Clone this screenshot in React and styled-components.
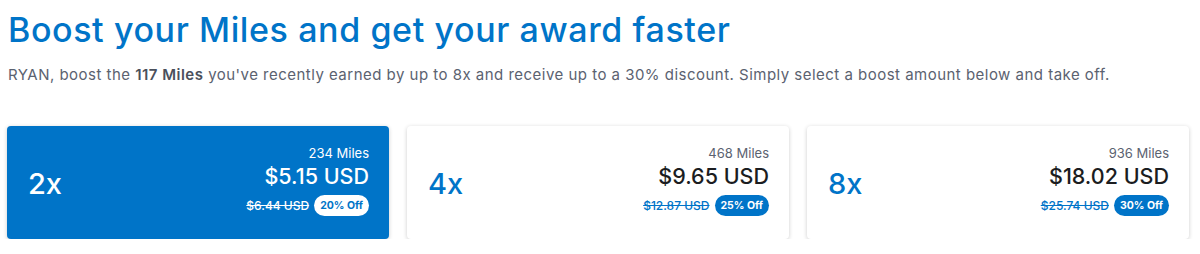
import React from 'react';
import styled, { createGlobalStyle } from 'styled-components';

const GlobalStyle = createGlobalStyle`
  body {
    margin: 0;
    background: #ffffff;
    font-family: "Inter", "Noto Sans", sans-serif;
  }
`;

const Page = styled.div`
  padding: 10px 11px 0 7px;
`;

const Title = styled.h1`
  margin: 0 0 0 1px;
  font-size: 34px;
  font-weight: 500;
  line-height: 40px;
  color: #0074c8;
  letter-spacing: 0.6px;
`;

const Intro = styled.p`
  margin: 15px 0 0 1px;
  font-size: 15px;
  line-height: 20px;
  letter-spacing: 0.48px;
  color: #5b6270;

  strong {
    font-weight: 600;
    color: #4a505c;
  }
`;

const Cards = styled.div`
  display: grid;
  grid-template-columns: repeat(3, 382px);
  gap: 18px;
  margin-top: 41px;
`;

const Card = styled.div`
  height: 113px;
  box-sizing: border-box;
  padding: 0 20px 4px 21px;
  border-radius: 4px;
  display: flex;
  align-items: center;
  justify-content: space-between;
  background: ${(p) => (p.active ? '#0074c8' : '#ffffff')};
  color: ${(p) => (p.active ? '#ffffff' : '#1b1d21')};
  box-shadow: 0 1px 4px rgba(0, 0, 0, 0.2);
`;

const Multiplier = styled.div`
  font-size: 29px;
  font-weight: 500;
  color: ${(p) => (p.active ? '#ffffff' : '#0074c8')};
  margin-top: 6px;
`;

const Prices = styled.div`
  display: flex;
  flex-direction: column;
  align-items: flex-end;
`;

const Miles = styled.div`
  font-size: 13px;
  line-height: 16px;
  color: ${(p) => (p.active ? '#ffffff' : '#5b6270')};
`;

const Price = styled.div`
  font-size: 21.5px;
  font-weight: 500;
  line-height: 26px;
  margin-top: 2px;
`;

const DealRow = styled.div`
  display: flex;
  align-items: center;
  gap: 5px;
  margin-top: 6px;
`;

const OldPrice = styled.span`
  font-size: 12px;
  font-weight: 500;
  text-decoration: line-through;
  color: ${(p) => (p.active ? '#ffffff' : '#0074c8')};
`;

const Badge = styled.span`
  display: inline-flex;
  align-items: center;
  justify-content: center;
  height: 21px;
  padding: 0 6px;
  border-radius: 11px;
  font-size: 10.5px;
  font-weight: 700;
  background: ${(p) => (p.active ? '#ffffff' : '#0074c8')};
  color: ${(p) => (p.active ? '#0074c8' : '#ffffff')};
`;

const boosts = [
  { mult: '2x', miles: '234 Miles', price: '$5.15 USD', old: '$6.44 USD', off: '20% Off', active: true },
  { mult: '4x', miles: '468 Miles', price: '$9.65 USD', old: '$12.87 USD', off: '25% Off' },
  { mult: '8x', miles: '936 Miles', price: '$18.02 USD', old: '$25.74 USD', off: '30% Off' },
];

export default function App() {
  return (
    <>
      <GlobalStyle />
      <Page>
        <Title>Boost your Miles and get your award faster</Title>
        <Intro>
          RYAN, boost the <strong>117 Miles</strong> you've recently earned by up to 8x and receive up to a 30% discount. Simply select a boost amount below and take off.
        </Intro>
        <Cards>
          {boosts.map((b) => (
            <Card key={b.mult} active={b.active}>
              <Multiplier active={b.active}>{b.mult}</Multiplier>
              <Prices>
                <Miles active={b.active}>{b.miles}</Miles>
                <Price>{b.price}</Price>
                <DealRow>
                  <OldPrice active={b.active}>{b.old}</OldPrice>
                  <Badge active={b.active}>{b.off}</Badge>
                </DealRow>
              </Prices>
            </Card>
          ))}
        </Cards>
      </Page>
    </>
  );
}
